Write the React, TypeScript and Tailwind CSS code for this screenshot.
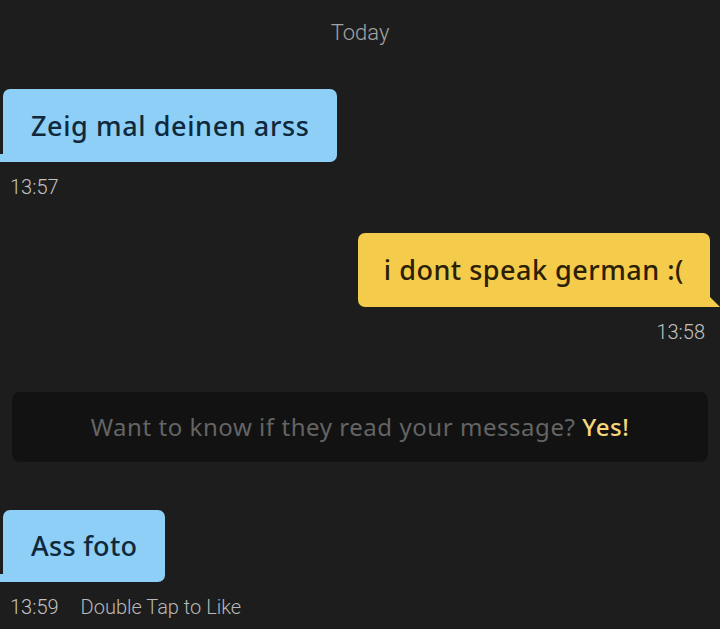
import React from 'react';

const bubbleFont = { fontFamily: '"Noto Sans", "DejaVu Sans", sans-serif' };

function Incoming({ text, className = '' }: { text: string; className?: string }) {
  return (
    <div className={`relative ml-[3px] self-start ${className}`}>
      <div className="rounded-[7px] rounded-bl-none bg-[#8dcff6] px-[28px] text-[#10283c] font-medium">
        {text}
      </div>
      {/* tail */}
      <div className="absolute -left-[3px] bottom-0 h-[8px] w-[4px] bg-[#8dcff6]" />
    </div>
  );
}

function Outgoing({ text, className = '' }: { text: string; className?: string }) {
  return (
    <div className={`relative mr-[10px] self-end ${className}`}>
      <div className="rounded-[7px] rounded-br-none bg-[#f4cb4b] px-[26px] text-[#2b2005] font-medium">
        {text}
      </div>
      <div className="absolute -right-[10px] bottom-0 h-0 w-0 border-l-[10px] border-t-[10px] border-l-[#f4cb4b] border-t-transparent" />
    </div>
  );
}

export default function App() {
  return (
    <div
      className="flex h-[629px] w-[720px] flex-col overflow-hidden bg-[#1d1d1d]"
      style={{ fontFamily: 'Roboto, "Liberation Sans", sans-serif' }}
    >
      <div className="mt-[20px] text-center text-[22px] leading-[26px] font-light text-[#a3a3a3]">Today</div>

      <div style={bubbleFont} className="mt-[43px] flex flex-col text-[27px] leading-[73px] tracking-[0.6px]">
        <Incoming text="Zeig mal deinen arss" />
      </div>
      <div className="ml-[10px] mt-[14px] text-[20px] leading-[22px] font-light text-[#c2c2c2]">13:57</div>

      <div style={bubbleFont} className="mt-[35px] flex flex-col text-[27px] leading-[74px] tracking-[0.5px]">
        <Outgoing text="i dont speak german :(" />
      </div>
      <div className="mr-[15px] mt-[14px] self-end text-[20px] leading-[22px] font-light text-[#c2c2c2]">13:58</div>

      <div className="mx-[12px] mt-[49px] flex h-[70px] items-center justify-center rounded-[8px] bg-[#121212] text-[24px] tracking-[0.55px]">
        <span style={bubbleFont} className="text-[#646464]">
          Want to know if they read your message? <span className="text-[#f6d77a] font-medium">Yes!</span>
        </span>
      </div>

      <div style={bubbleFont} className="mt-[48px] flex flex-col text-[27px] leading-[72px] tracking-[0.3px]">
        <Incoming text="Ass foto" />
      </div>
      <div className="ml-[10px] mt-[14px] flex items-center gap-[22px] text-[20px] leading-[22px] font-light text-[#c2c2c2]">
        <span>13:59</span>
        <span className="text-[#b8b8b8]">Double Tap to Like</span>
      </div>
    </div>
  );
}
